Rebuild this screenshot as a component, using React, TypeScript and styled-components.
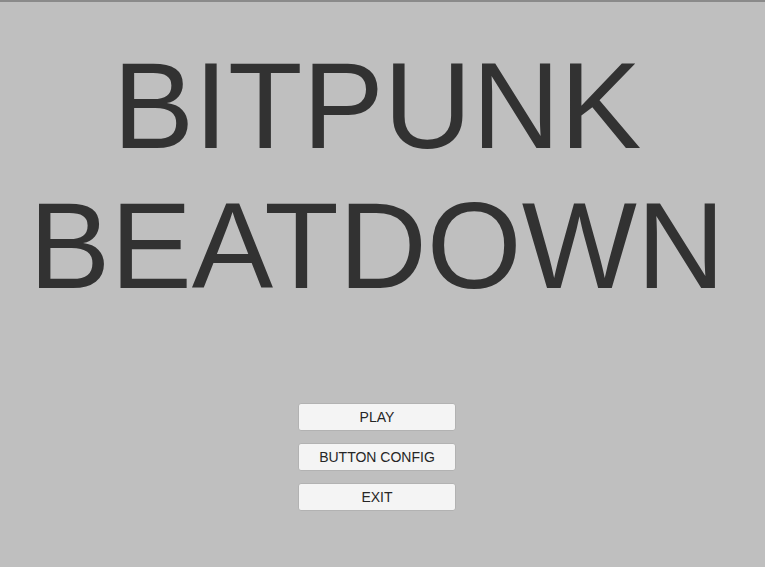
import React from "react";
import styled, { createGlobalStyle } from "styled-components";

const Global = createGlobalStyle`
  html, body { margin: 0; padding: 0; }
  body { background: #bfbfbf; font-family: "Liberation Sans", Arial, sans-serif; }
`;

const Screen = styled.div`
  width: 765px;
  height: 567px;
  box-sizing: border-box;
  border-top: 2px solid #8a8a8a;
  padding-right: 11px;
  background: #bfbfbf;
  display: flex;
  flex-direction: column;
  align-items: center;
  overflow: hidden;
`;

const Title = styled.h1`
  margin: 34px 0 0 0;
  font-family: "Liberation Sans", Arial, sans-serif;
  font-weight: 400;
  font-size: 122px;
  line-height: 140px;
  color: #323232;
  text-align: center;
  white-space: nowrap;
`;

const Menu = styled.div`
  margin-top: 87px;
  display: flex;
  flex-direction: column;
  gap: 12px;
`;

const MenuButton = styled.button`
  width: 158px;
  height: 28px;
  box-sizing: border-box;
  border: 1px solid #b2b2b2;
  border-radius: 3px;
  background: #f4f4f4;
  color: #262626;
  font-family: "Liberation Sans", Arial, sans-serif;
  font-size: 14px;
  padding: 0;
  display: flex;
  align-items: center;
  justify-content: center;
  cursor: pointer;
`;

export default function App() {
  return (
    <>
      <Global />
      <Screen>
        <Title>
          BITPUNK
          <br />
          BEATDOWN
        </Title>
        <Menu>
          <MenuButton>PLAY</MenuButton>
          <MenuButton>BUTTON CONFIG</MenuButton>
          <MenuButton>EXIT</MenuButton>
        </Menu>
      </Screen>
    </>
  );
}
